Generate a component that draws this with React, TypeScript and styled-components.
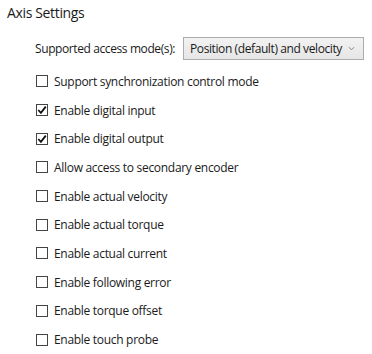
import styled, { createGlobalStyle } from 'styled-components'

const GlobalStyle = createGlobalStyle`
  html, body {
    margin: 0;
    padding: 0;
    background: #ffffff;
  }
  body {
    font-family: 'Open Sans', 'Noto Sans', sans-serif;
    color: #1a1a1a;
  }
`

const options = [
  { label: 'Support synchronization control mode', checked: false },
  { label: 'Enable digital input', checked: true },
  { label: 'Enable digital output', checked: true },
  { label: 'Allow access to secondary encoder', checked: false },
  { label: 'Enable actual velocity', checked: false },
  { label: 'Enable actual torque', checked: false },
  { label: 'Enable actual current', checked: false },
  { label: 'Enable following error', checked: false },
  { label: 'Enable torque offset', checked: false },
  { label: 'Enable touch probe', checked: false },
]

const CheckIcon = () => (
  <svg width='10' height='10' viewBox='0 0 10 10'>
    <path
      d='M1.3 5 L3.9 7.8 L8.8 1.6'
      fill='none'
      stroke='#111'
      strokeWidth='1.8'
    />
  </svg>
)

const App = () => {
  return (
    <Wrapper>
      <GlobalStyle />
      <Title>Axis Settings</Title>
      <ModeRow>
        <Label>Supported access mode(s):</Label>
        <Dropdown>
          <span>Position (default) and velocity</span>
          <Chevron viewBox='0 0 7 5'>
            <path d='M1 1.2 L3.5 3.8 L6 1.2' fill='none' stroke='#888' strokeWidth='1' />
          </Chevron>
        </Dropdown>
      </ModeRow>
      <List>
        {options.map((o) => (
          <Row key={o.label}>
            <Box>{o.checked ? <CheckIcon /> : null}</Box>
            <Text>{o.label}</Text>
          </Row>
        ))}
      </List>
    </Wrapper>
  )
}

const Wrapper = styled.section`
  width: 372px;
  height: 354px;
  overflow: hidden;
  padding: 3px 0 0 7px;
  box-sizing: border-box;
`

const Title = styled.h1`
  margin: 0;
  font-size: 14px;
  font-weight: 400;
  line-height: 20px;
  letter-spacing: -0.35px;
  color: #1a1a1a;
`

const ModeRow = styled.div`
  display: flex;
  align-items: center;
  gap: 9px;
  margin: 14px 0 0 28px;
`

const Label = styled.span`
  width: 139px;
  font-size: 12px;
  letter-spacing: -0.4px;
  white-space: nowrap;
`

const Dropdown = styled.div`
  display: flex;
  align-items: center;
  justify-content: space-between;
  box-sizing: border-box;
  width: 181px;
  height: 23px;
  padding: 0 8px 0 6px;
  border: 1px solid #acacac;
  background: linear-gradient(#f2f2f2, #e6e6e6);
  font-size: 12px;
  letter-spacing: -0.4px;
`

const Chevron = styled.svg`
  width: 7px;
  height: 5px;
`

const List = styled.div`
  display: flex;
  flex-direction: column;
  margin: 7px 0 0 29px;
`

const Row = styled.div`
  display: flex;
  align-items: center;
  gap: 6px;
  height: 28.7px;
`

const Box = styled.div`
  display: flex;
  align-items: center;
  justify-content: center;
  box-sizing: border-box;
  width: 12px;
  height: 12px;
  border: 1px solid #444;
  background: #fff;
`

const Text = styled.span`
  font-size: 12px;
  letter-spacing: -0.3px;
`

export default App
